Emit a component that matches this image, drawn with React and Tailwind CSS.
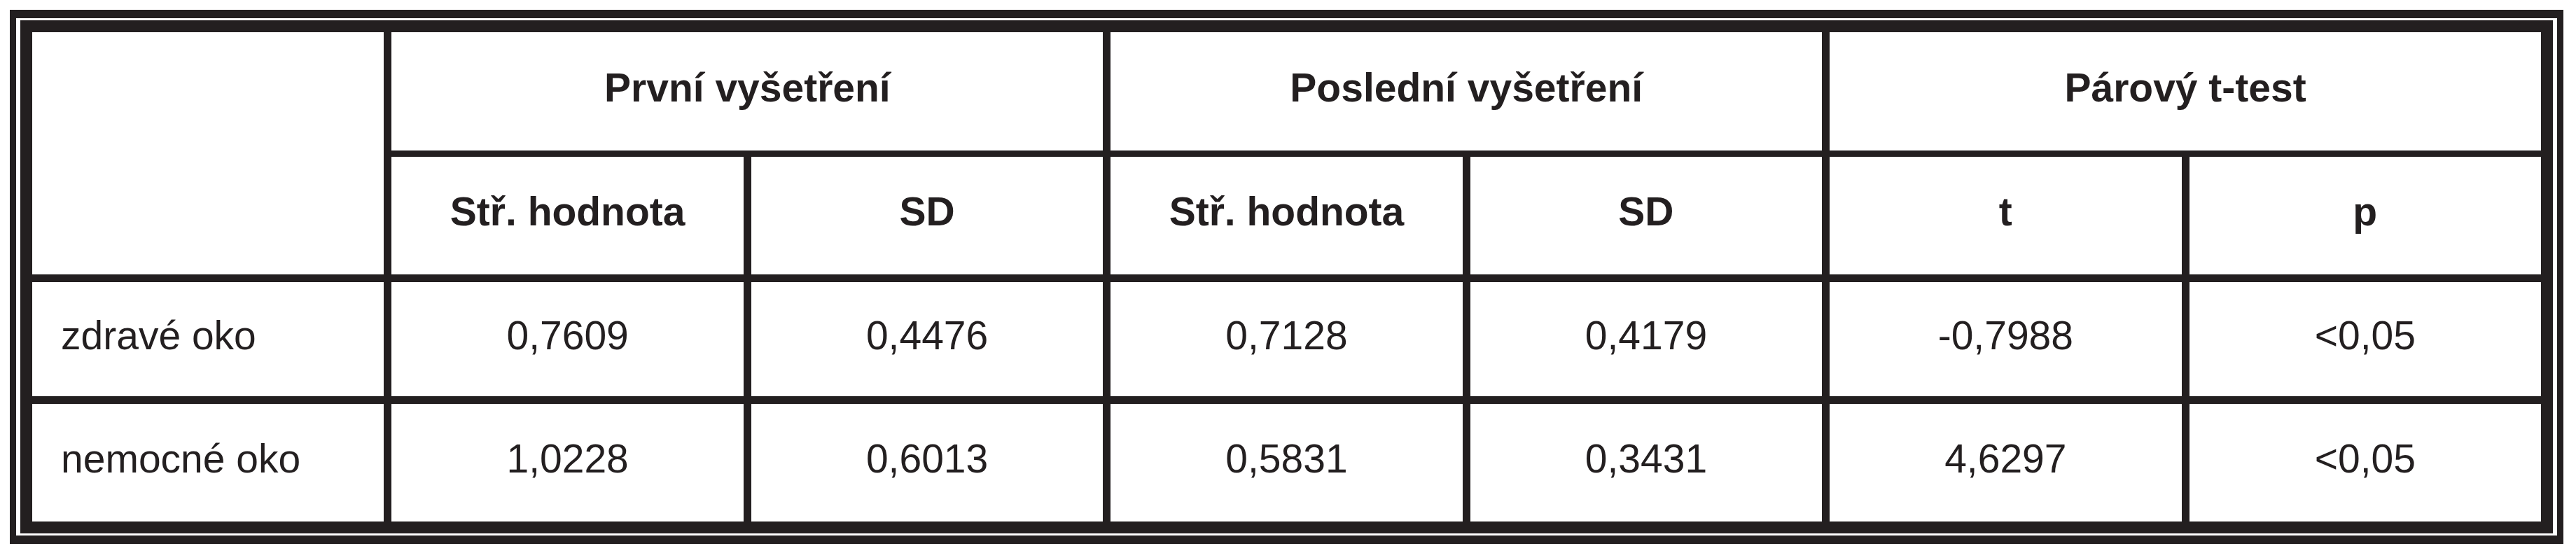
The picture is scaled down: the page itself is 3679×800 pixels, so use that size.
import React from "react";

const hlavicka = ["Stř. hodnota", "SD", "Stř. hodnota", "SD", "t", "p"];

const radky = [
  { nazev: "zdravé oko", hodnoty: ["0,7609", "0,4476", "0,7128", "0,4179", "-0,7988", "<0,05"] },
  { nazev: "nemocné oko", hodnoty: ["1,0228", "0,6013", "0,5831", "0,3431", "4,6297", "<0,05"] },
];

function Bunka({ children, className = "" }) {
  return (
    <div className={`bg-white flex items-center justify-center pb-[10px] ${className}`}>
      {children}
    </div>
  );
}

export default function App() {
  return (
    <div className="w-[3679px] h-[800px] bg-white pt-[14px] pl-[14px] font-['Liberation_Sans',Arial,sans-serif] text-[#231f20]">
      {/* dvojity ramecek */}
      <div className="w-[3647px] h-[763px] border-x-[9px] border-y-[12px] border-[#231f20] px-[6px] py-[3px]">
        <div className="h-full bg-[#231f20] p-[17px]">
          <div className="grid grid-cols-7 grid-rows-[167px_168px_163px_168px] gap-x-[11px] gap-y-[11px] h-full">
            <div className="bg-white row-span-2" />
            <Bunka className="col-span-2 -mb-[2px] font-bold text-[57px]">První vyšetření</Bunka>
            <Bunka className="col-span-2 -mb-[2px] font-bold text-[57px]">Poslední vyšetření</Bunka>
            <Bunka className="col-span-2 -mb-[2px] font-bold text-[57px]">Párový t-test</Bunka>

            {hlavicka.map((h, i) => (
              <Bunka key={i} className="font-bold text-[57px]">{h}</Bunka>
            ))}

            {radky.map((r) => (
              <React.Fragment key={r.nazev}>
                <div className="bg-white flex items-center pl-[41px] pb-[10px] text-[57px]">{r.nazev}</div>
                {r.hodnoty.map((v, i) => (
                  <Bunka key={i} className="text-[57px]">{v}</Bunka>
                ))}
              </React.Fragment>
            ))}
          </div>
        </div>
      </div>
    </div>
  );
}
